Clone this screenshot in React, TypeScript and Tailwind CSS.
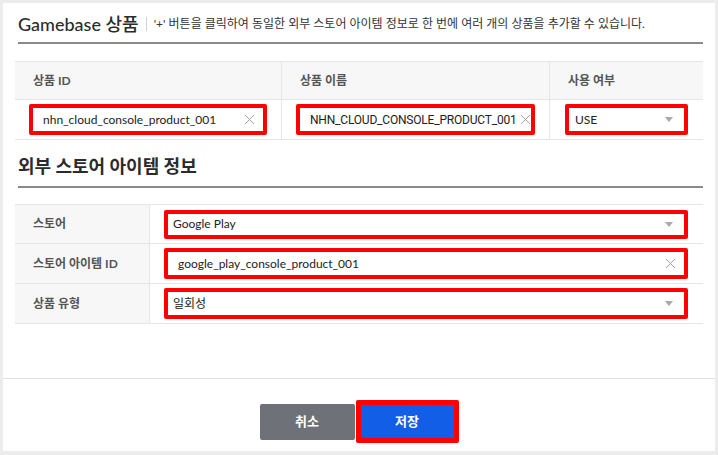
import { X } from "lucide-react";

const font = { fontFamily: 'Lato, "Noto Sans CJK KR", sans-serif' };

const Caret = () => (
  <svg width="8" height="5" viewBox="0 0 8 5" className="shrink-0">
    <path d="M0 0 L8 0 L4 5 Z" fill="#a9a9a9" />
  </svg>
);

const Clear = () => <X size={17} strokeWidth={1.3} className="shrink-0 text-[#9a9a9a]" />;

const Box = ({ children, className = "" }: { children: React.ReactNode; className?: string }) => (
  <div
    className={`flex items-center justify-between border-[4px] border-[#ff0000] rounded-[2px] bg-white text-[12px] text-[#222] ${className}`}
  >
    {children}
  </div>
);

const StoreRow = ({ label, children, h }: { label: string; children: React.ReactNode; h: string }) => (
  <div className={`flex border-b border-[#e6e6e6] ${h}`}>
    <div className="w-[135px] shrink-0 bg-[#f7f7f7] border-r border-[#e6e6e6] flex items-center pl-[18px] text-[12px] font-bold text-[#555]">
      {label}
    </div>
    <div className="flex-1 flex items-center pl-[14px] pr-[15px]">{children}</div>
  </div>
);

export default function App() {
  return (
    <div className="h-screen bg-[#ececec] pt-[3px] pl-[3px] pr-[3px] pb-[4px]" style={font}>
      <div className="h-full bg-white flex flex-col">
        <div className="flex-1 px-[12px] pt-[8px]">
          <div className="ml-[3px] flex items-center border-b-2 border-[#8a8a8a] pb-[5px]">
            <h1 className="text-[18px] leading-[26px] font-medium text-[#2b2b2b]">Gamebase 상품</h1>
            <span className="mx-[7px] h-[14px] w-px bg-[#cfcfcf]" />
            <p className="text-[12px] text-[#333]">'+' 버튼을 클릭하여 동일한 외부 스토어 아이템 정보로 한 번에 여러 개의 상품을 추가할 수 있습니다.</p>
          </div>

          <div className="mt-[17px] border-t border-[#e6e6e6]">
            <div className="flex h-[38px] bg-[#f7f7f7] border-b border-[#e6e6e6] text-[12px] font-bold text-[#555]">
              <div className="w-[267px] border-r border-[#e6e6e6] flex items-center pl-[18px]">상품 ID</div>
              <div className="w-[268px] border-r border-[#e6e6e6] flex items-center pl-[18px]">상품 이름</div>
              <div className="flex-1 flex items-center pl-[18px]">사용 여부</div>
            </div>
            <div className="flex h-[40px] border-b border-[#e6e6e6]">
              <div className="w-[267px] border-r border-[#e6e6e6] flex items-center px-[14px]">
                <Box className="w-full h-[31px] pl-[10px] pr-[5px]">
                  <span>nhn_cloud_console_product_001</span>
                  <Clear />
                </Box>
              </div>
              <div className="w-[268px] border-r border-[#e6e6e6] flex items-center px-[14px]">
                <Box className="w-full h-[31px] pl-[10px] pr-[5px]">
                  <span className="font-['Roboto'] tracking-[-0.2px]">NHN_CLOUD_CONSOLE_PRODUCT_001</span>
                  <Clear />
                </Box>
              </div>
              <div className="flex-1 flex items-center px-[15px]">
                <Box className="w-full h-[31px] pl-[6px] pr-[11px]">
                  <span>USE</span>
                  <Caret />
                </Box>
              </div>
            </div>
          </div>

          <div className="mt-[13px] ml-[3px] border-b-2 border-[#8a8a8a] pb-[7px]">
            <h2 className="text-[18px] leading-[26px] font-bold text-[#2b2b2b]">외부 스토어 아이템 정보</h2>
          </div>

          <div className="mt-[16px] border-t border-[#e6e6e6]">
            <StoreRow label="스토어" h="h-[39px]">
              <Box className="w-full h-[29px] pl-[5px] pr-[11px]">
                <span>Google Play</span>
                <Caret />
              </Box>
            </StoreRow>
            <StoreRow label="스토어 아이템 ID" h="h-[40px]">
              <Box className="w-full h-[31px] pl-[10px] pr-[5px]">
                <span>google_play_console_product_001</span>
                <Clear />
              </Box>
            </StoreRow>
            <StoreRow label="상품 유형" h="h-[40px]">
              <Box className="w-full h-[31px] pl-[5px] pr-[11px]">
                <span>일회성</span>
                <Caret />
              </Box>
            </StoreRow>
          </div>
        </div>

        <div className="h-[73px] border-t border-[#e2e2e2] flex justify-center items-start pt-[21px]">
          <button className="mt-[4px] w-[95px] h-[36px] rounded-[2px] bg-[#6f7178] text-white text-[13px] font-bold">
            취소
          </button>
          <div className="ml-px border-[5px] border-[#ff0000] rounded-[2px]">
            <button className="w-[93px] h-[33px] bg-[#135ee6] text-white text-[13px] font-bold">저장</button>
          </div>
        </div>
      </div>
    </div>
  );
}
